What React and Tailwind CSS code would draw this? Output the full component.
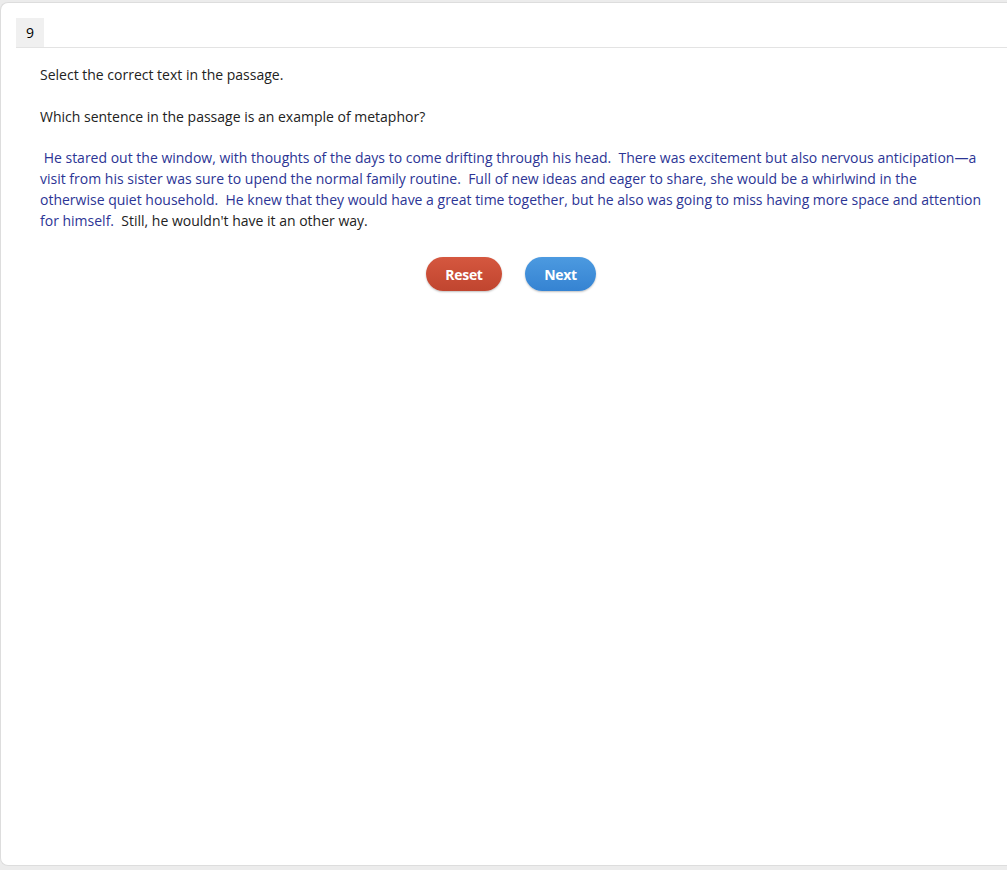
const passage = [
  " He stared out the window, with thoughts of the days to come drifting through his head.",
  "There was excitement but also nervous anticipation\u2014a visit from his sister was sure to upend the normal family routine.",
  "Full of new ideas and eager to share, she would be a whirlwind in the otherwise quiet household.",
  "He knew that they would have a great time together, but he also was going to miss having more space and attention for himself.",
];

export default function App() {
  return (
    <div className="h-[870px] bg-[#ececec] pt-[2px] font-['Open_Sans',sans-serif] text-[14px] text-[#222]">
      <div className="h-[864px] bg-white border-t border-b border-l border-[#dddddd] rounded-tl-[8px] rounded-bl-[8px]">
        <div className="ml-[15px] pt-[15px] border-b border-[#e3e3e3]">
          <div className="w-[28px] h-[29px] bg-[#f0f0f0] flex items-center justify-center text-[14px] text-black">
            9
          </div>
        </div>

        <div className="pl-[39px] pr-[23px] pt-[16px] leading-[21px]">
          <p>Select the correct text in the passage.</p>
          <p className="mt-[21px]">Which sentence in the passage is an example of metaphor?</p>
          <p className="mt-[20px] whitespace-pre-wrap">
            <span className="text-[#2c3595]">{passage.join("  ") + "  "}</span>
            <span>Still, he wouldn't have it an other way.</span>
          </p>

          <div className="flex justify-center gap-[23px] mt-[26px] pr-[2px]">
            <button className="w-[76px] h-[34px] rounded-full bg-gradient-to-b from-[#d5573f] to-[#c0452f] text-white font-bold text-[14px] tracking-[-0.3px] shadow-[0_1px_2px_rgba(0,0,0,0.25)]">
              Reset
            </button>
            <button className="w-[71px] h-[34px] rounded-full bg-gradient-to-b from-[#4c9ae0] to-[#3583d2] text-white font-bold text-[14px] tracking-[-0.3px] shadow-[0_1px_2px_rgba(0,0,0,0.25)]">
              Next
            </button>
          </div>
        </div>
      </div>
    </div>
  );
}
